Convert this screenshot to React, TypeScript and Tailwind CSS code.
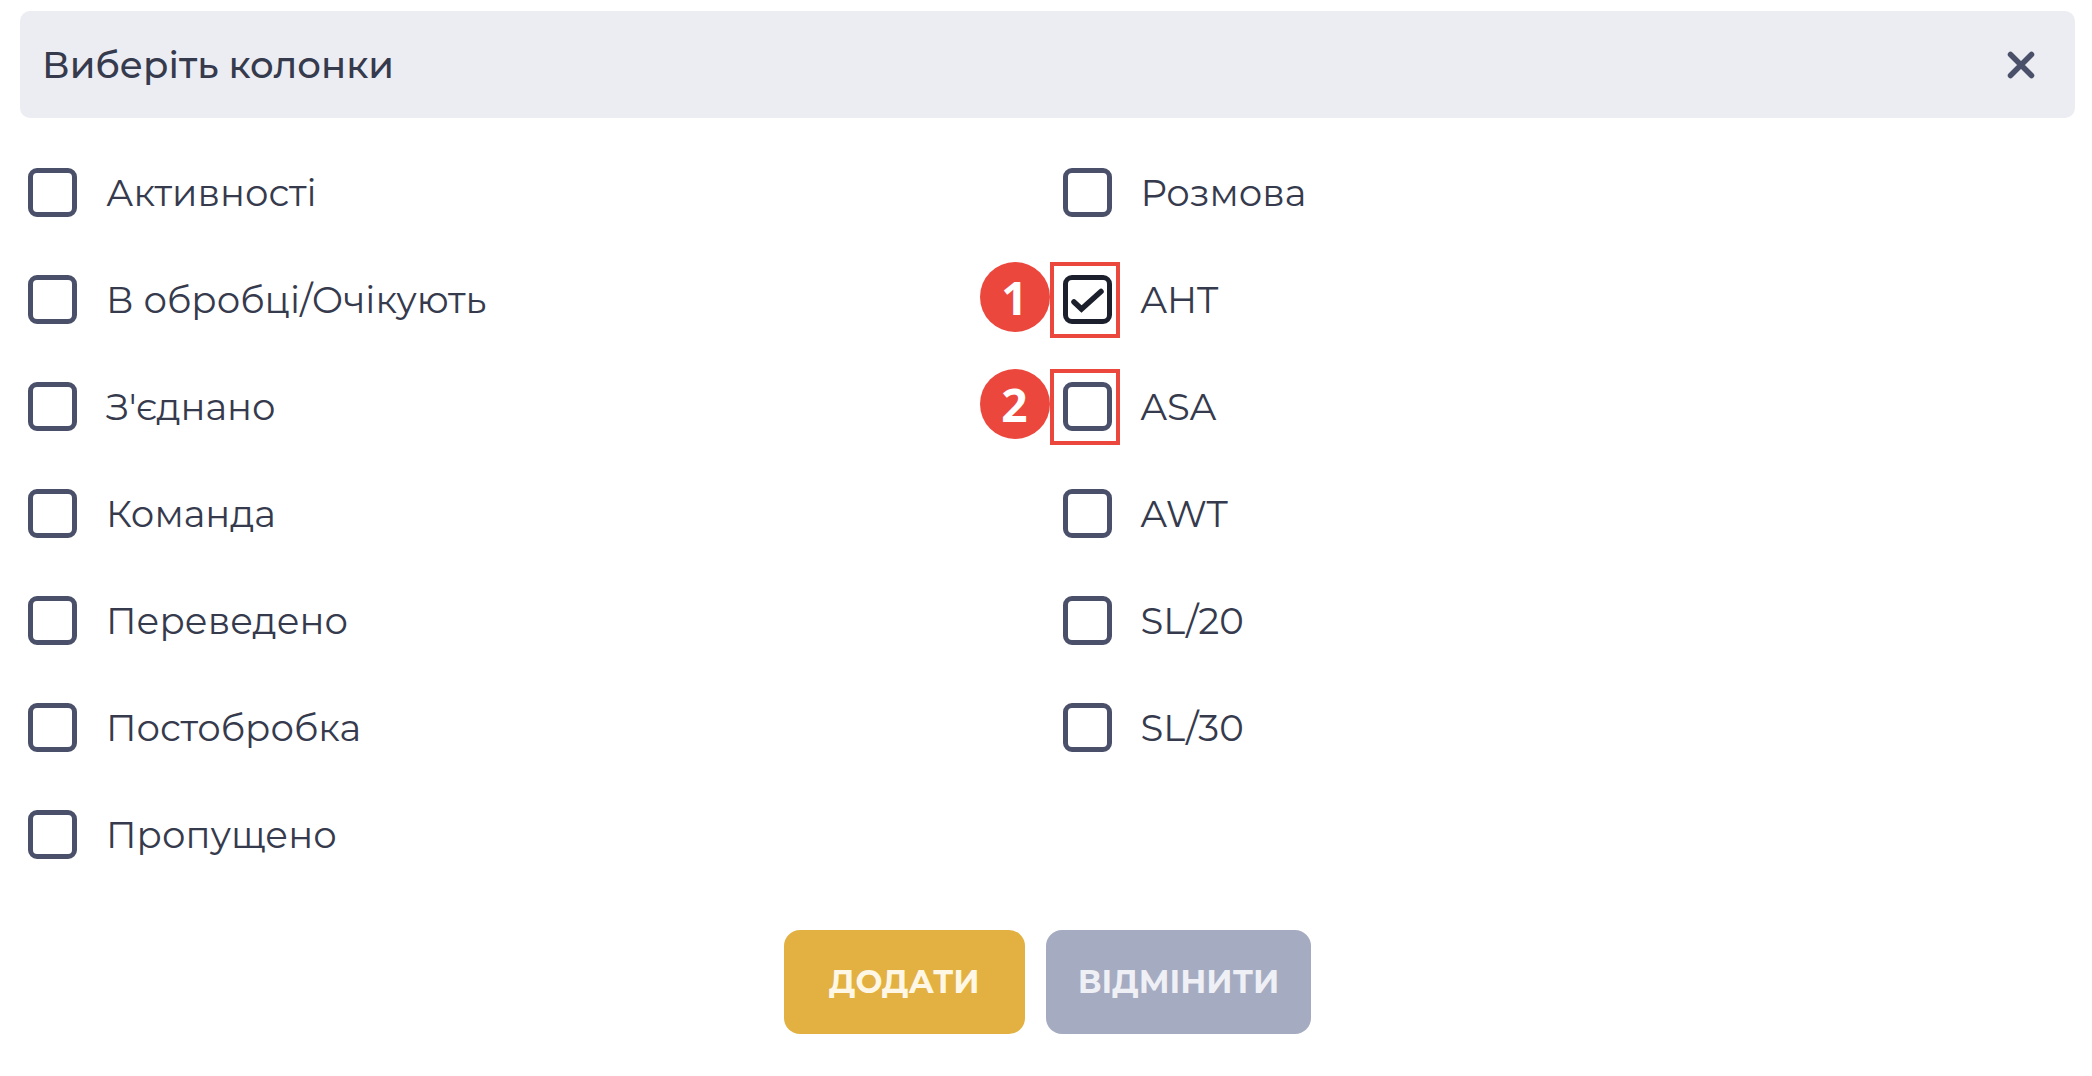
import { FC, useState } from "react";
import clsx from "clsx";

interface ColumnOption {
  id: string;
  label: string;
  step?: number;
}

const leftColumns: ColumnOption[] = [
  { id: "activities", label: "Активності" },
  { id: "processing", label: "В обробці/Очікують" },
  { id: "connected", label: "З'єднано" },
  { id: "team", label: "Команда" },
  { id: "transferred", label: "Переведено" },
  { id: "postprocessing", label: "Постобробка" },
  { id: "missed", label: "Пропущено" },
];

const rightColumns: ColumnOption[] = [
  { id: "talk", label: "Розмова" },
  { id: "aht", label: "AHT", step: 1 },
  { id: "asa", label: "ASA", step: 2 },
  { id: "awt", label: "AWT" },
  { id: "sl20", label: "SL/20" },
  { id: "sl30", label: "SL/30" },
];

const StepMarker: FC<{ step: number }> = ({ step }) => {
  return (
    <>
      <span className="pointer-events-none absolute -left-[13px] -top-[13px] h-[76px] w-[70px] border-4 border-[#eb473d]" />
      <span className="pointer-events-none absolute -left-[83px] -top-[13px] flex size-[70px] items-center justify-center rounded-full bg-[#eb473d] font-['Open_Sans',sans-serif] text-[46px] font-bold leading-none text-white">
        {step}
      </span>
    </>
  );
};

interface ColumnCheckboxProps {
  option: ColumnOption;
  checked: boolean;
  onToggle: (id: string) => void;
}

const ColumnCheckbox: FC<ColumnCheckboxProps> = ({
  option,
  checked,
  onToggle,
}) => {
  return (
    <div className="flex items-center gap-[29px]">
      <span className="relative size-[49px] shrink-0">
        <input
          id={option.id}
          type="checkbox"
          checked={checked}
          onChange={() => onToggle(option.id)}
          className={clsx(
            "block size-[49px] cursor-pointer appearance-none rounded-[9px] border-[5px] bg-white",
            checked ? "border-[#1c1f2c]" : "border-[#4a5069]"
          )}
        />
        {checked && (
          <svg
            viewBox="0 0 49 49"
            fill="none"
            stroke="#1c1f2c"
            strokeWidth="5.5"
            strokeLinecap="round"
            strokeLinejoin="miter"
            className="pointer-events-none absolute inset-0 size-[49px]"
          >
            <path d="M11 27l7.5 7L38 16.5" />
          </svg>
        )}
        {option.step && <StepMarker step={option.step} />}
      </span>
      <label
        htmlFor={option.id}
        className="cursor-pointer text-[37px] leading-12"
      >
        {option.label}
      </label>
    </div>
  );
};

const App: FC = () => {
  const [selected, setSelected] = useState<string[]>(["aht"]);

  const toggle = (id: string) => {
    setSelected((prev) =>
      prev.includes(id) ? prev.filter((item) => item !== id) : [...prev, id]
    );
  };

  return (
    <div className="min-h-screen bg-white pb-10 pl-5 pr-[17px] pt-[11px] font-[Montserrat,Inter,sans-serif] text-[#363a4d]">
      <header className="flex h-[107px] items-center justify-between rounded-[10px] bg-[#ecedf2] pl-[22px] pr-10">
        <h1 className="text-[37px] font-medium leading-12">
          Виберіть колонки
        </h1>
        <button type="button" aria-label="Закрити" className="cursor-pointer">
          <svg
            viewBox="0 0 28 28"
            stroke="#4a5069"
            strokeWidth="5.5"
            strokeLinecap="round"
            className="size-7"
          >
            <path d="M3.5 3.5l21 21M24.5 3.5l-21 21" />
          </svg>
        </button>
      </header>

      <div className="mt-[50px] grid grid-cols-2 gap-x-[22px] pl-2">
        {[leftColumns, rightColumns].map((columns, index) => (
          <div key={index} className="flex flex-col gap-[58px]">
            {columns.map((option) => (
              <ColumnCheckbox
                key={option.id}
                option={option}
                checked={selected.includes(option.id)}
                onToggle={toggle}
              />
            ))}
          </div>
        ))}
      </div>

      <div className="mt-[71px] flex justify-center gap-[21px] text-[32px] font-bold leading-10">
        <button
          type="button"
          className="h-[104px] min-w-[241px] cursor-pointer rounded-2xl bg-[#e2b141] px-8 text-[#fff7e6]"
        >
          ДОДАТИ
        </button>
        <button
          type="button"
          className="h-[104px] min-w-[265px] cursor-pointer rounded-2xl bg-[#a5abc1] px-8 text-[#eff0f5]"
        >
          ВІДМІНИТИ
        </button>
      </div>
    </div>
  );
};

export default App;
